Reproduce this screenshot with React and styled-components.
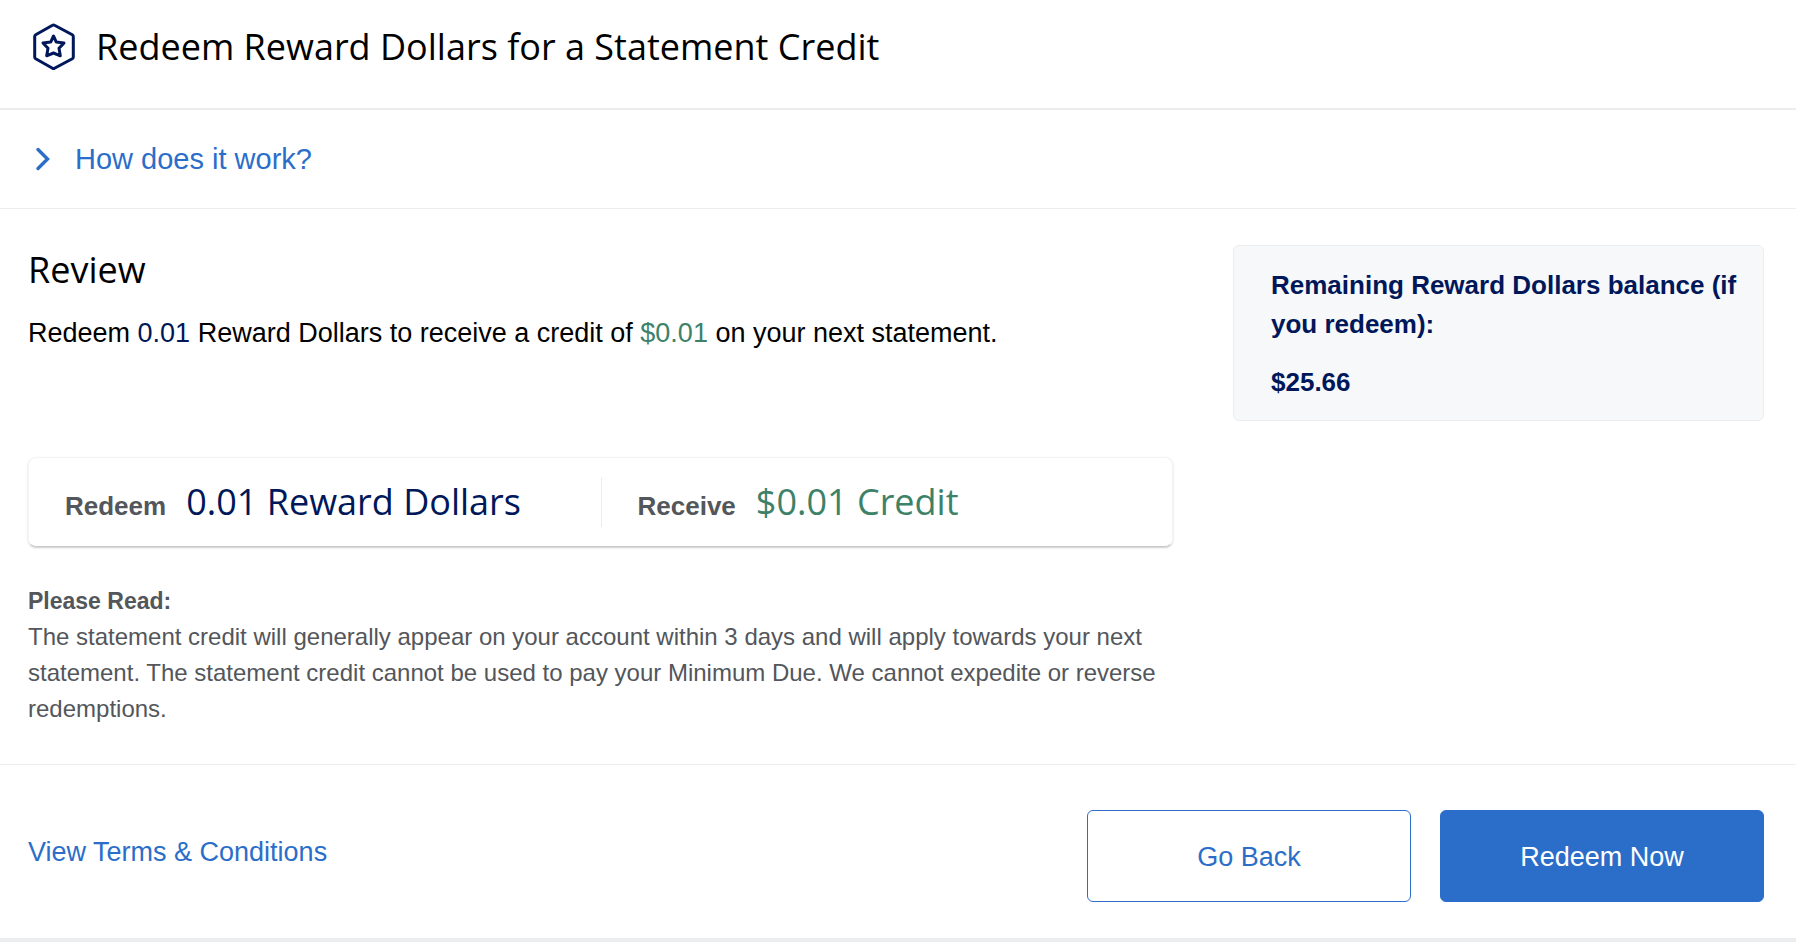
import styled, { createGlobalStyle } from 'styled-components';

const GlobalStyle = createGlobalStyle`
  * {
    box-sizing: border-box;
  }

  body {
    margin: 0;
    background: #fff;
    color: #000;
    font-family: "Liberation Sans", Arial, sans-serif;
    font-size: 27px;
    line-height: 40px;
  }

  h1, h2, h3, p {
    margin: 0;
  }
`;

const Page = styled.div`
  border-bottom: 4px solid #ecedee;
`;

const Header = styled.header`
  display: flex;
  align-items: flex-start;
  gap: 20px;
  padding: 22px 32px 36px;
  border-bottom: 2px solid #ecedee;

  svg {
    flex: none;
    display: block;
  }
`;

const Title = styled.h1`
  font-family: "Open Sans", "Noto Sans", sans-serif;
  font-size: 36px;
  line-height: 50px;
  font-weight: 400;
`;

const HowItWorks = styled.section`
  padding: 29px 32px;
  border-bottom: 1px solid #ecedee;
`;

const Toggle = styled.button`
  display: flex;
  align-items: center;
  gap: 21px;
  padding: 0;
  border: 0;
  background: none;
  color: #2b6ec9;
  font-family: inherit;
  font-size: 29px;
  line-height: 40px;
  cursor: pointer;
`;

const Review = styled.main`
  display: flex;
  align-items: flex-start;
  gap: 60px;
  padding: 36px 32px 37px 28px;
  border-bottom: 1px solid #ecedee;
`;

const Details = styled.div`
  flex: 1;
  min-width: 0;
`;

const Heading = styled(Title).attrs({ as: 'h2' })``;

const Summary = styled.p`
  margin: 18px 0 104px;
`;

const Amount = styled.span`
  color: ${({ $credit }) => ($credit ? '#3d8268' : '#00175a')};
`;

const ExchangeCard = styled.div`
  display: grid;
  grid-template-columns: 1fr 1fr;
  padding: 19px 0;
  border: 1px solid #f4f4f5;
  border-bottom-color: #c8c9c7;
  border-radius: 8px;
  box-shadow: 0 1px 2px rgba(0, 0, 0, 0.2);
`;

const Exchange = styled.div`
  display: flex;
  align-items: baseline;
  gap: 20px;
  padding-left: 36px;

  & + & {
    border-left: 1px solid #ecedee;
  }
`;

const ExchangeLabel = styled.span`
  color: #53565a;
  font-size: 26px;
  font-weight: 700;
  line-height: 36px;
`;

const ExchangeValue = styled(Amount)`
  font-family: "Open Sans", "Noto Sans", sans-serif;
  font-size: 36px;
  line-height: 50px;
`;

const Notice = styled.section`
  margin-top: 36px;
  color: #53565a;
  font-size: 24px;
  line-height: 36px;
`;

const NoticeTitle = styled.h3`
  font-size: 23px;
  font-weight: 700;
  line-height: 36px;
`;

const Balance = styled.aside`
  flex: 0 1 531px;
  padding: 20px 16px 18px 37px;
  border: 1px solid #ecedee;
  border-radius: 6px;
  background: #f7f8f9;
  color: #00175a;
  font-size: 26px;
  font-weight: 700;
  line-height: 39px;

  p + p {
    margin-top: 19px;
  }
`;

const Footer = styled.footer`
  display: flex;
  align-items: center;
  justify-content: space-between;
  padding: 45px 32px 36px 28px;
`;

const TermsLink = styled.a`
  padding-bottom: 8px;
  color: #2b6ec9;
  text-decoration: none;
`;

const Actions = styled.div`
  display: flex;
  gap: 29px;
`;

const Button = styled.button`
  width: 324px;
  height: 92px;
  padding: 2px 16px 0;
  border: 1px solid #2b6ec9;
  border-radius: 6px;
  background: ${({ $primary }) => ($primary ? '#2b6ec9' : '#fff')};
  color: ${({ $primary }) => ($primary ? '#fff' : '#2b6ec9')};
  font-family: inherit;
  font-size: 27px;
  cursor: pointer;
`;

function RewardIcon() {
  return (
    <svg
      width="44"
      height="50"
      viewBox="0 0 44 50"
      fill="none"
      stroke="#00175a"
      strokeWidth="3"
      strokeLinejoin="round"
      aria-hidden="true"
    >
      <path d="M20.5 3.3 Q21.5 2.7 22.5 3.3 L40.3 12.8 Q41.3 13.4 41.3 14.6 V34.9 Q41.3 36.1 40.3 36.7 L22.5 46.2 Q21.5 46.8 20.5 46.2 L3.7 36.7 Q2.7 36.1 2.7 34.9 V14.6 Q2.7 13.4 3.7 12.8 Z" />
      <path d="M21.5 14 L24.3 20.1 L32 20.9 L27 26.3 L28.3 33.8 L21.5 31 L14.7 33.8 L16 26.3 L11 20.9 L18.7 20.1 Z" />
    </svg>
  );
}

function ChevronIcon() {
  return (
    <svg
      width="22"
      height="26"
      viewBox="0 0 22 26"
      fill="none"
      stroke="currentColor"
      strokeWidth="3.4"
      strokeLinecap="round"
      aria-hidden="true"
    >
      <path d="M6 3.5 L15.5 13 L6 22.5" />
    </svg>
  );
}

export default function App() {
  return (
    <Page>
      <GlobalStyle />
      <Header>
        <RewardIcon />
        <Title>Redeem Reward Dollars for a Statement Credit</Title>
      </Header>
      <HowItWorks>
        <Toggle type="button" aria-expanded="false">
          <ChevronIcon />
          How does it work?
        </Toggle>
      </HowItWorks>
      <Review>
        <Details>
          <Heading>Review</Heading>
          <Summary>
            Redeem <Amount>0.01</Amount> Reward Dollars to receive a credit of{' '}
            <Amount $credit>$0.01</Amount> on your next statement.
          </Summary>
          <ExchangeCard>
            <Exchange>
              <ExchangeLabel>Redeem</ExchangeLabel>
              <ExchangeValue>0.01 Reward Dollars</ExchangeValue>
            </Exchange>
            <Exchange>
              <ExchangeLabel>Receive</ExchangeLabel>
              <ExchangeValue $credit>$0.01 Credit</ExchangeValue>
            </Exchange>
          </ExchangeCard>
          <Notice>
            <NoticeTitle>Please Read:</NoticeTitle>
            <p>
              The statement credit will generally appear on your account within 3 days and will
              apply towards your next statement. The statement credit cannot be used to pay your
              Minimum Due. We cannot expedite or reverse redemptions.
            </p>
          </Notice>
        </Details>
        <Balance>
          <p>Remaining Reward Dollars balance (if you redeem):</p>
          <p>$25.66</p>
        </Balance>
      </Review>
      <Footer>
        <TermsLink href="#terms">View Terms &amp; Conditions</TermsLink>
        <Actions>
          <Button type="button">Go Back</Button>
          <Button type="button" $primary>Redeem Now</Button>
        </Actions>
      </Footer>
    </Page>
  );
}
